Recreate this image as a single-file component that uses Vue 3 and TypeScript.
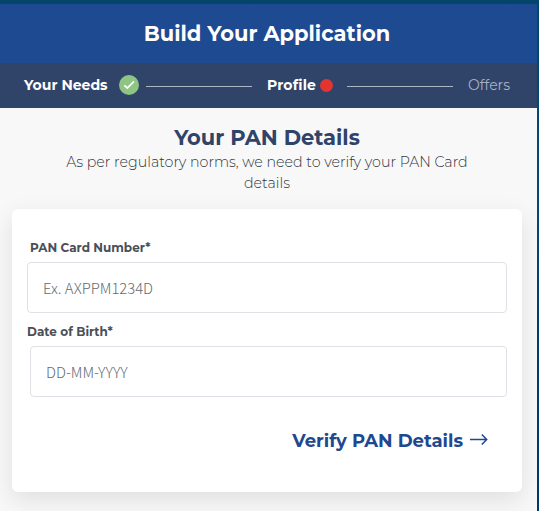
<script setup lang="ts">
import { ref } from 'vue'

const panNumber = ref('')
const birthDate = ref('')
</script>

<template>
  <main class="page">
    <div class="screen">
      <header class="topbar"><h1>Build Your Application</h1></header>
      <nav class="steps">
        <span class="step needs">Your Needs</span>
        <svg class="check" viewBox="0 0 20 20" width="20" height="20">
          <circle cx="10" cy="10" r="10" fill="#8fc584" />
          <path d="M5.3 10.3 8.3 13 15 6.3" fill="none" stroke="#fff" stroke-width="1.7" />
        </svg>
        <span class="line first"></span>
        <span class="step profile">Profile</span>
        <span class="dot"></span>
        <span class="line second"></span>
        <span class="step offers">Offers</span>
      </nav>
      <section class="intro">
        <h2>Your PAN Details</h2>
        <p><span>As per regulatory norms, we need to verify your PAN Card</span><br /><span>details</span></p>
      </section>
      <form class="card" @submit.prevent>
        <label class="pan-label" for="pan">PAN Card Number*</label>
        <input id="pan" v-model="panNumber" class="pan-input" placeholder="Ex. AXPPM1234D" />
        <label class="dob-label" for="dob">Date of Birth*</label>
        <input id="dob" v-model="birthDate" class="dob-input" placeholder="DD-MM-YYYY" />
        <button type="submit" class="verify">
          <span>Verify PAN Details</span>
          <svg viewBox="0 0 18 12" width="18" height="12">
            <path d="M0 6.5H17M11.8 1.5 16.7 6.5 11.8 11.5" fill="none" stroke="#1e4890" stroke-width="1.5" />
          </svg>
        </button>
      </form>
    </div>
  </main>
</template>

<style>
body { margin: 0; overflow: hidden; }
</style>

<style scoped>
* { box-sizing: border-box; }
.page {
  height: 511px;
  padding: 4px 2px 0 0;
  background: linear-gradient(#04466b 0, #00497a 210px, #003d70 330px, #00386b 100%);
  font-family: Montserrat, Inter, "Liberation Sans", sans-serif;
}
.screen { height: 507px; background: #f8f8f8; overflow: hidden; }
.topbar {
  height: 59px;
  display: flex;
  align-items: center;
  justify-content: center;
  padding-right: 3px;
  background: #1e4a92;
}
h1 { margin: 0; color: #fff; font-size: 21px; font-weight: 700; line-height: 26px; white-space: nowrap; }
.steps {
  height: 45px;
  display: flex;
  align-items: center;
  padding: 0 0 1px 24px;
  background: #304369;
}
.step { color: #fff; font-size: 14px; font-weight: 700; line-height: 20px; white-space: nowrap; flex: none; }
.needs { width: 95px; }
.check { flex: none; }
.line { height: 1px; width: 106px; flex: none; background: #adb4c3; }
.first { margin: 3px 15px 0 7px; }
.profile { width: 52px; letter-spacing: 0.15px; }
.dot { width: 13px; height: 13px; flex: none; border-radius: 50%; background: #e3342f; margin-left: 1px; }
.second { margin: 3px 15px 0 14px; }
.offers { color: #a9b2c3; font-weight: 400; }
.intro { height: 101px; padding: 15px 3px 0 0; text-align: center; }
h2 { margin: 0; color: #304369; font-size: 21px; font-weight: 700; line-height: 29px; }
p { margin: 0; color: #2f363d; font-size: 14.23px; font-weight: 300; line-height: 21px; white-space: nowrap; }
.card {
  display: flex;
  flex-direction: column;
  align-items: flex-start;
  width: 510px;
  height: 283px;
  margin-left: 12px;
  padding: 30px 15px 0;
  border-radius: 6px;
  background: #fff;
  box-shadow: 0 8px 24px rgba(0, 0, 0, 0.1);
}
label { color: #495057; font-size: 12px; font-weight: 700; line-height: 18px; }
.pan-label { margin: 0 0 5px 3px; }
.dob-label { margin: 10px 0 5px; }
input {
  width: 480px;
  height: 51px;
  padding: 0 15px 1px;
  border: 1px solid #dee2e6;
  border-radius: 4px;
  outline: none;
  background: #fff;
  font: 300 14.8px "Source Sans Pro", "Noto Sans CJK SC", sans-serif;
}
input::placeholder { color: #626b73; opacity: 1; }
.dob-input { width: 477px; margin-left: 3px; }
.verify {
  display: flex;
  align-items: center;
  align-self: flex-end;
  gap: 7px;
  margin: 32px 19px 0 0;
  padding: 0;
  border: 0;
  background: none;
  color: #1e4890;
  font: 700 18px/24px Montserrat, Inter, sans-serif;
}
.verify svg { margin-top: -4px; }
</style>
